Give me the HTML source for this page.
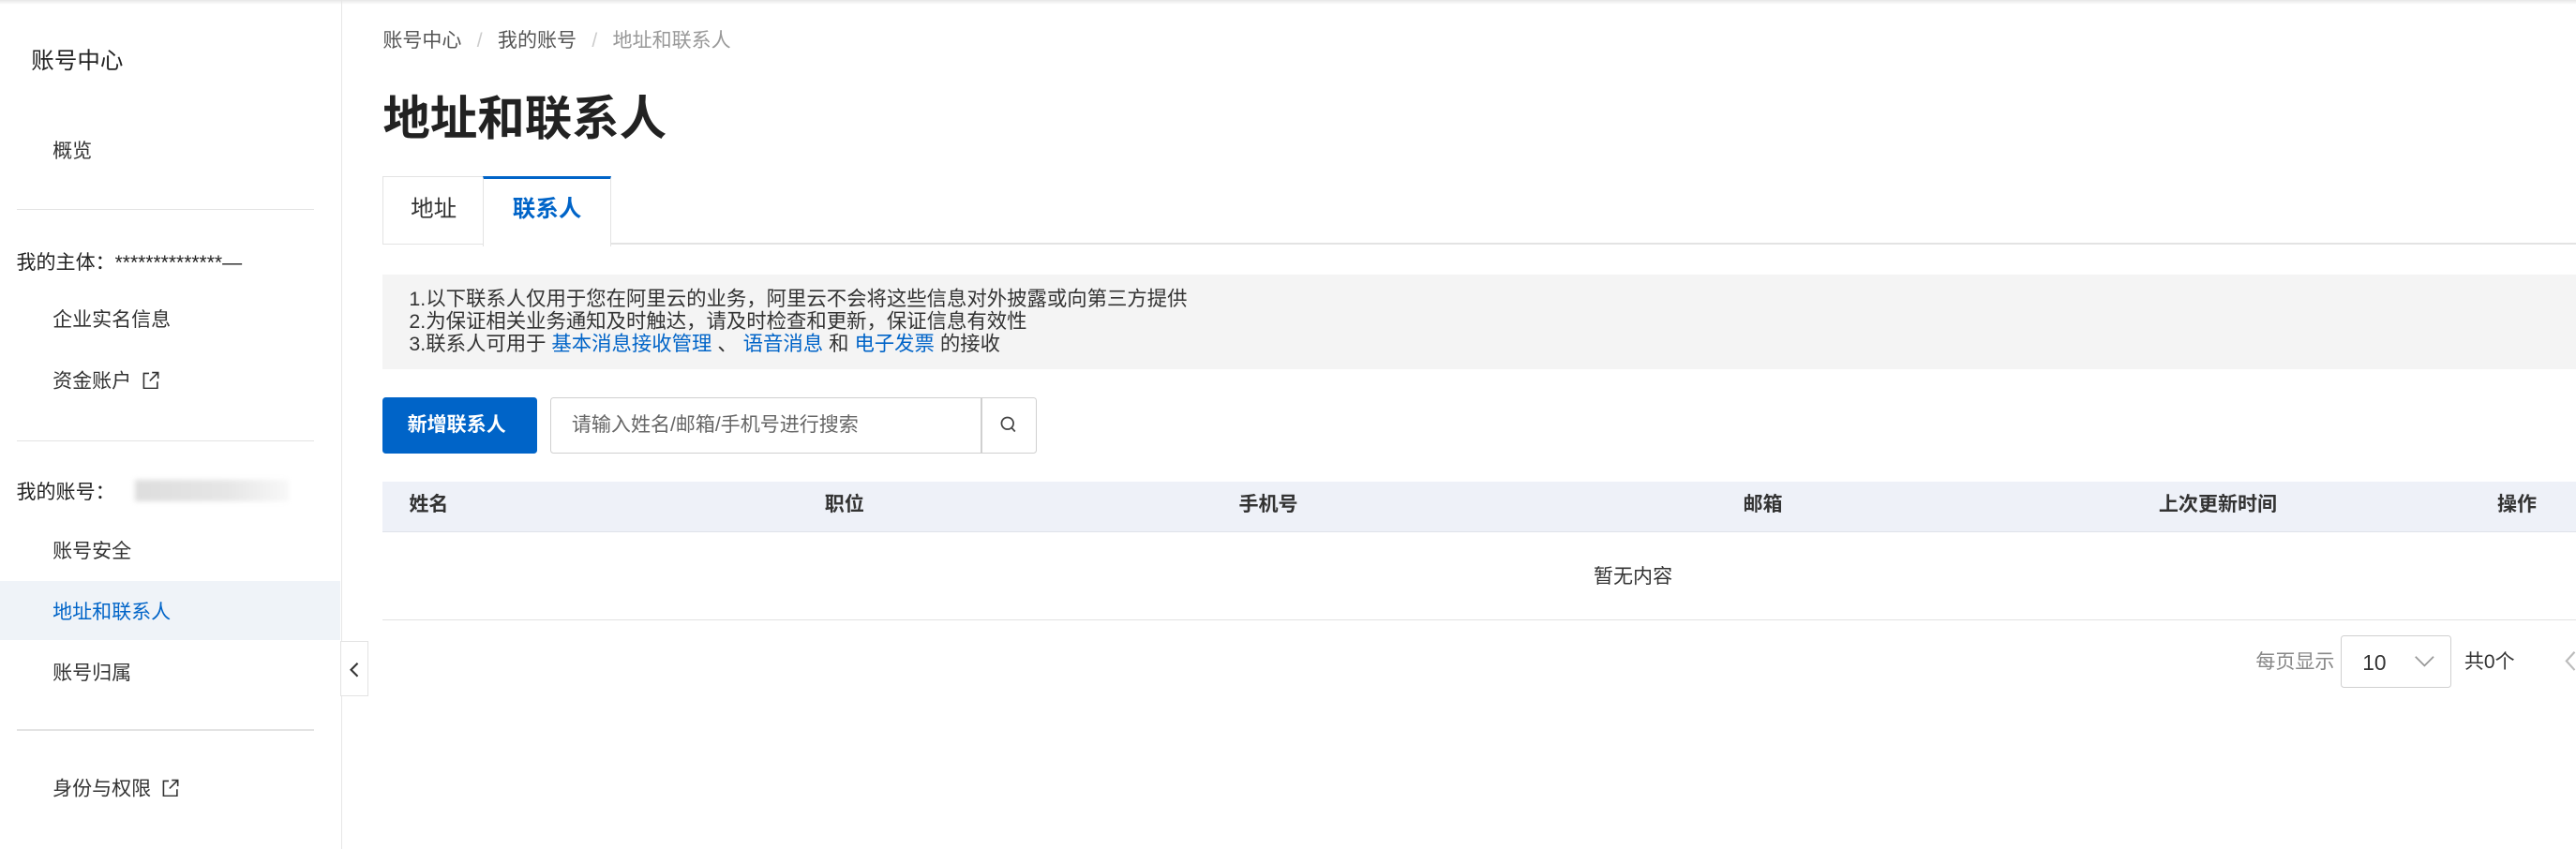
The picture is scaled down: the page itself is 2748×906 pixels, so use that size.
<!DOCTYPE html>
<html><head><meta charset="utf-8"><style>
*{box-sizing:border-box;margin:0;padding:0}
html,body{width:2748px;height:906px;overflow:hidden;background:#fff}
#w{zoom:1.7526;width:1568px;height:517px;position:relative;font-family:"Liberation Sans","Noto Sans CJK SC",sans-serif;color:#333;font-size:12px}
.a{position:absolute;white-space:nowrap;line-height:1}
.top{position:absolute;left:0;top:0;width:1568px;height:3px;background:linear-gradient(#e6e6e6,#fff)}
.side{position:absolute;left:0;top:0;width:208px;height:517px;border-right:1px solid #e6e6e6}
.hr{position:absolute;left:10px;width:181px;height:1px;background:#e3e3e3}
.ext{display:inline-block;width:11px;height:11px;margin-left:6px;vertical-align:-1px}
.blue{color:#0064c8}
.th{position:absolute;top:301px;font-weight:bold;font-size:12px;line-height:1;color:#333}
</style></head><body><div id="w">
<div class="top"></div>
<div class="side">
 <div class="a" style="left:19px;top:31px;font-size:14px;color:#222">账号中心</div>
 <div class="a" style="left:32px;top:86px;font-size:12px">概览</div>
 <div class="hr" style="top:127px"></div>
 <div class="a" style="left:10px;top:154px;font-size:12px;color:#222">我的主体：**************—</div>
 <div class="a" style="left:32px;top:189px">企业实名信息</div>
 <div class="a" style="left:32px;top:226px">资金账户<svg class="ext" viewBox="0 0 12 12" fill="none" stroke="#333" stroke-width="1"><path d="M5 1.5H1.5v10h9V7M7 1h4v4M11 1L5.5 6.5"/></svg></div>
 <div class="hr" style="top:268px"></div>
 <div class="a" style="left:10px;top:294px;color:#222">我的账号：</div>
 <div style="position:absolute;left:82px;top:292px;width:94px;height:13px;background:linear-gradient(90deg,#ddd,#e6e6e6 60%,#f8f8f8);filter:blur(1.5px)"></div>
 <div class="a" style="left:32px;top:330px">账号安全</div>
 <div style="position:absolute;left:0;top:354px;width:207px;height:36px;background:#eff3f8"></div>
 <div class="a blue" style="left:32px;top:367px">地址和联系人</div>
 <div class="a" style="left:32px;top:404px">账号归属</div>
 <div class="hr" style="top:444px"></div>
 <div class="a" style="left:32px;top:474px">身份与权限<svg class="ext" viewBox="0 0 12 12" fill="none" stroke="#333" stroke-width="1"><path d="M5 1.5H1.5v10h9V7M7 1h4v4M11 1L5.5 6.5"/></svg></div>
</div>
<div style="position:absolute;left:207px;top:390px;width:17px;height:34px;border:1px solid #e3e3e3;background:#fff"><svg style="position:absolute;left:4px;top:12px" width="8" height="10" viewBox="0 0 8 10"><path d="M6 1L2 5l4 4" fill="none" stroke="#333" stroke-width="1.2"/></svg></div>

<div class="a" style="left:233px;top:19px;color:#555">账号中心 <span style="color:#ccc;margin:0 6px">/</span> 我的账号 <span style="color:#ccc;margin:0 6px">/</span> <span style="color:#999">地址和联系人</span></div>
<div class="a" style="left:233px;top:58px;font-size:28.8px;font-weight:bold;color:#222">地址和联系人</div>

<div style="position:absolute;left:371px;top:148px;width:1197px;height:1px;background:#e3e3e3"></div>
<div style="position:absolute;left:233px;top:107px;width:62px;height:42px;border:1px solid #e3e3e3;background:#fff"></div>
<div class="a" style="left:250px;top:121px;font-size:14px">地址</div>
<div style="position:absolute;left:294px;top:107px;width:78px;height:43px;border:1px solid #e3e3e3;border-bottom:none;border-top:2px solid #0064c8;background:#fff"></div>
<div class="a blue" style="left:312px;top:121px;font-size:14px;font-weight:bold">联系人</div>

<div style="position:absolute;left:233px;top:167px;width:1335px;height:58px;background:#f4f4f4"></div>
<div style="position:absolute;left:249px;top:176px;line-height:13.6px;font-size:12.2px;color:#333;white-space:nowrap">1.以下联系人仅用于您在阿里云的业务，阿里云不会将这些信息对外披露或向第三方提供<br>2.为保证相关业务通知及时触达，请及时检查和更新，保证信息有效性<br>3.联系人可用于 <span class="blue">基本消息接收管理</span> 、 <span class="blue">语音消息</span> 和 <span class="blue">电子发票</span> 的接收</div>

<div style="position:absolute;left:233px;top:242px;width:94px;height:34px;background:#0064c8;border-radius:2px"></div>
<div class="a" style="left:248px;top:253px;color:#fff;font-weight:bold">新增联系人</div>
<div style="position:absolute;left:335px;top:242px;width:296px;height:34px;border:1px solid #d0d0d0;border-radius:2px"></div>
<div style="position:absolute;left:597px;top:242px;width:1px;height:34px;background:#d0d0d0"></div>
<div class="a" style="left:348px;top:253px;color:#666">请输入姓名/邮箱/手机号进行搜索</div>
<svg style="position:absolute;left:608px;top:253px" width="11" height="12" viewBox="0 0 11 12"><circle cx="5" cy="5" r="3.6" fill="none" stroke="#444" stroke-width="1"/><path d="M7.6 7.8l2 2.2" stroke="#444" stroke-width="1"/></svg>

<div style="position:absolute;left:233px;top:293px;width:1335px;height:31px;background:#eef1f8;border-bottom:1px solid #e0e3ea"></div>
<div class="th" style="left:249px">姓名</div>
<div class="th" style="left:502px">职位</div>
<div class="th" style="left:754px">手机号</div>
<div class="th" style="left:1061px">邮箱</div>
<div class="th" style="left:1314px">上次更新时间</div>
<div class="th" style="left:1520px">操作</div>
<div class="a" style="left:970px;top:345px">暂无内容</div>
<div style="position:absolute;left:233px;top:377px;width:1335px;height:1px;background:#e3e3e3"></div>

<div class="a" style="left:1373px;top:397px;color:#888">每页显示</div>
<div style="position:absolute;left:1425px;top:387px;width:67px;height:32px;border:1px solid #d0d0d0;border-radius:2px"></div>
<div class="a" style="left:1438px;top:397px;font-size:13px">10</div>
<svg style="position:absolute;left:1469px;top:399px" width="13" height="8" viewBox="0 0 13 8"><path d="M1 1l5.5 5.5L12 1" fill="none" stroke="#999" stroke-width="1"/></svg>
<div class="a" style="left:1500px;top:397px">共0个</div>
<svg style="position:absolute;left:1561px;top:396px" width="7" height="13" viewBox="0 0 7 13"><path d="M6 1L1 6.5 6 12" fill="none" stroke="#bbb" stroke-width="1.2"/></svg>
</div></body></html>
